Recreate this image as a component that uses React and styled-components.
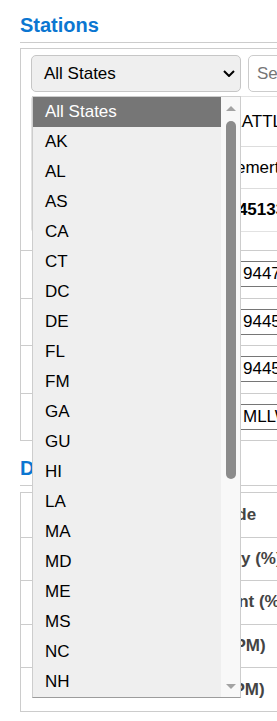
import React from 'react'
import styled, { createGlobalStyle } from 'styled-components'

const GlobalStyle = createGlobalStyle`
  html, body {
    margin: 0;
    padding: 0;
    overflow: hidden;
    background: #fff;
  }
  body {
    font-family: "Liberation Sans", Arial, sans-serif;
    color: #000;
  }
`

const Page = styled.div`
  width: 470px;
  padding-left: 20px;
`

const SectionTitle = styled.h2`
  margin: ${p => (p.$first ? '0' : '2px')} 0 0;
  padding: 13px 0 5px;
  font-size: 20px;
  line-height: 24px;
  font-weight: 700;
  color: #0b76d1;
  border-bottom: 1px solid #ccc;
`

const Panel = styled.div`
  margin-top: 5px;
  border: 1px solid #ccc;
`

const Toolbar = styled.div`
  display: flex;
  gap: 7px;
  padding: 6px 10px 0;
`

const SelectWrap = styled.div`
  position: relative;
  width: 210px;
  flex: none;
`

const SelectBox = styled.div`
  height: 37px;
  box-sizing: border-box;
  border: 1px solid #c6c6c6;
  border-radius: 5px;
  background: #efefef;
  display: flex;
  align-items: center;
  justify-content: space-between;
  padding: 0 5px 0 12px;
  font-size: 17px;
`

const SearchInput = styled.input`
  flex: 1;
  min-width: 0;
  height: 37px;
  box-sizing: border-box;
  border: 1px solid #ccc;
  border-radius: 5px;
  padding: 0 8px;
  font: 17px "Liberation Sans", Arial, sans-serif;
  &::placeholder {
    color: #767676;
  }
`

const Dropdown = styled.div`
  position: absolute;
  top: 41px;
  left: 1px;
  width: 209px;
  height: 602px;
  box-sizing: border-box;
  border: 1px solid #cdcdcd;
  border-bottom-color: #9c9c9c;
  background: #efefef;
  display: flex;
  overflow: hidden;
  z-index: 10;
`

const OptionList = styled.ul`
  flex: 1;
  margin: 0;
  padding: 0;
  list-style: none;
`

const Option = styled.li`
  height: 30px;
  line-height: 30px;
  padding-left: 12px;
  font-size: 17px;
  background: ${p => (p.$active ? '#767676' : 'transparent')};
  color: ${p => (p.$active ? '#fff' : '#000')};
`

const ScrollTrack = styled.div`
  width: 19px;
  flex: none;
  background: #f8f8f8;
  display: flex;
  flex-direction: column;
  align-items: center;
  padding: 9px 0 8px 1px;
  box-sizing: border-box;
`

const Arrow = styled.div`
  width: 0;
  height: 0;
  border-left: 5px solid transparent;
  border-right: 5px solid transparent;
  ${p =>
    p.$down
      ? 'border-top: 5px solid #a3a3a3; margin-top: auto;'
      : 'border-bottom: 5px solid #a3a3a3;'}
`

const Thumb = styled.div`
  width: 10px;
  height: 358px;
  margin-top: 10px;
  border-radius: 5px;
  background: #8b8b8b;
`

const Card = styled.div`
  margin: 4px 10px 18px;
  border: 1px solid #e2e2e2;
  border-radius: 3px;
`

const CardRow = styled.div`
  display: grid;
  grid-template-columns: 187px 1fr;
  align-items: center;
  height: ${p => p.$h}px;
  box-sizing: border-box;
  border-top: ${p => (p.$first ? 'none' : '1px solid #ddd')};
  font-size: 17px;
  font-weight: ${p => (p.$bold ? 700 : 400)};
  white-space: nowrap;
`

const CardLabel = styled.span`
  padding-left: 12px;
  color: #666;
`

const FieldRow = styled.div`
  display: grid;
  grid-template-columns: 219px 1fr;
  align-items: center;
  height: 47.5px;
  box-sizing: border-box;
  border-top: 1px solid #ccc;
  font-size: 17px;
`

const FieldLabel = styled.span`
  padding-left: 12px;
  font-weight: 700;
  color: #444;
`

const FieldInput = styled.input`
  height: 26px;
  box-sizing: border-box;
  border: 1px solid #767676;
  padding: 0 2px;
  font: 17px "Liberation Sans", Arial, sans-serif;
  color: #000;
  width: 200px;
`

const DataBox = styled.div`
  margin-top: 6px;
  border: 1px solid #ccc;
`

const DataRow = styled.div`
  display: grid;
  grid-template-columns: 160px 1fr;
  align-items: center;
  height: 43.6px;
  box-sizing: border-box;
  border-top: ${p => (p.$first ? 'none' : '1px solid #ccc')};
  font-size: 17px;
  font-weight: 700;
  color: #444;
  white-space: nowrap;
`

const DataIndex = styled.span`
  padding-left: 12px;
  font-weight: 400;
  color: #777;
`

const DataLabel = styled.span`
  padding-left: 9px;
`

const states = [
  'All States', 'AK', 'AL', 'AS', 'CA', 'CT', 'DC', 'DE', 'FL', 'FM', 'GA',
  'GU', 'HI', 'LA', 'MA', 'MD', 'ME', 'MS', 'NC', 'NH', 'NJ', 'NY', 'OR', 'WA',
]

const cardRows = [
  { label: 'Station', value: 'SEATTLE', h: 49 },
  { label: 'Nearest', value: 'Bremerton', h: 42 },
  { label: 'ID', value: '9445133', h: 43, bold: true },
]

const fields = [
  { label: 'Station ID', value: '9447130' },
  { label: 'Reference ID', value: '9445133' },
  { label: 'Backup ID', value: '9445958' },
  { label: 'Datum', value: 'MLLW' },
]

const dataRows = ['Latitude', 'Salinity (%)', 'Content (%)', 'O3 (PPM)', 'H2 (PPM)']

function Chevron() {
  return (
    <svg width="12" height="7" viewBox="0 0 12 7">
      <path d="M1 1l5 5 5-5" fill="none" stroke="#000" strokeWidth="2" />
    </svg>
  )
}

export default function App() {
  return (
    <Page>
      <GlobalStyle />
      <SectionTitle $first>Stations</SectionTitle>
      <Panel>
        <Toolbar>
          <SelectWrap>
            <SelectBox>
              <span>All States</span>
              <Chevron />
            </SelectBox>
            <Dropdown>
              <OptionList>
                {states.map((s, i) => (
                  <Option key={s} $active={i === 0}>{s}</Option>
                ))}
              </OptionList>
              <ScrollTrack>
                <Arrow />
                <Thumb />
                <Arrow $down />
              </ScrollTrack>
            </Dropdown>
          </SelectWrap>
          <SearchInput placeholder="Search..." />
        </Toolbar>
        <Card>
          {cardRows.map((r, i) => (
            <CardRow key={r.label} $h={r.h} $first={i === 0} $bold={r.bold}>
              <CardLabel>{r.label}</CardLabel>
              <span>{r.value}</span>
            </CardRow>
          ))}
        </Card>
        {fields.map(f => (
          <FieldRow key={f.label}>
            <FieldLabel>{f.label}</FieldLabel>
            <FieldInput defaultValue={f.value} />
          </FieldRow>
        ))}
      </Panel>
      <SectionTitle>Data</SectionTitle>
      <DataBox>
        {dataRows.map((d, i) => (
          <DataRow key={d} $first={i === 0}>
            <DataIndex>{i + 1}</DataIndex>
            <DataLabel>{d}</DataLabel>
          </DataRow>
        ))}
      </DataBox>
    </Page>
  )
}
